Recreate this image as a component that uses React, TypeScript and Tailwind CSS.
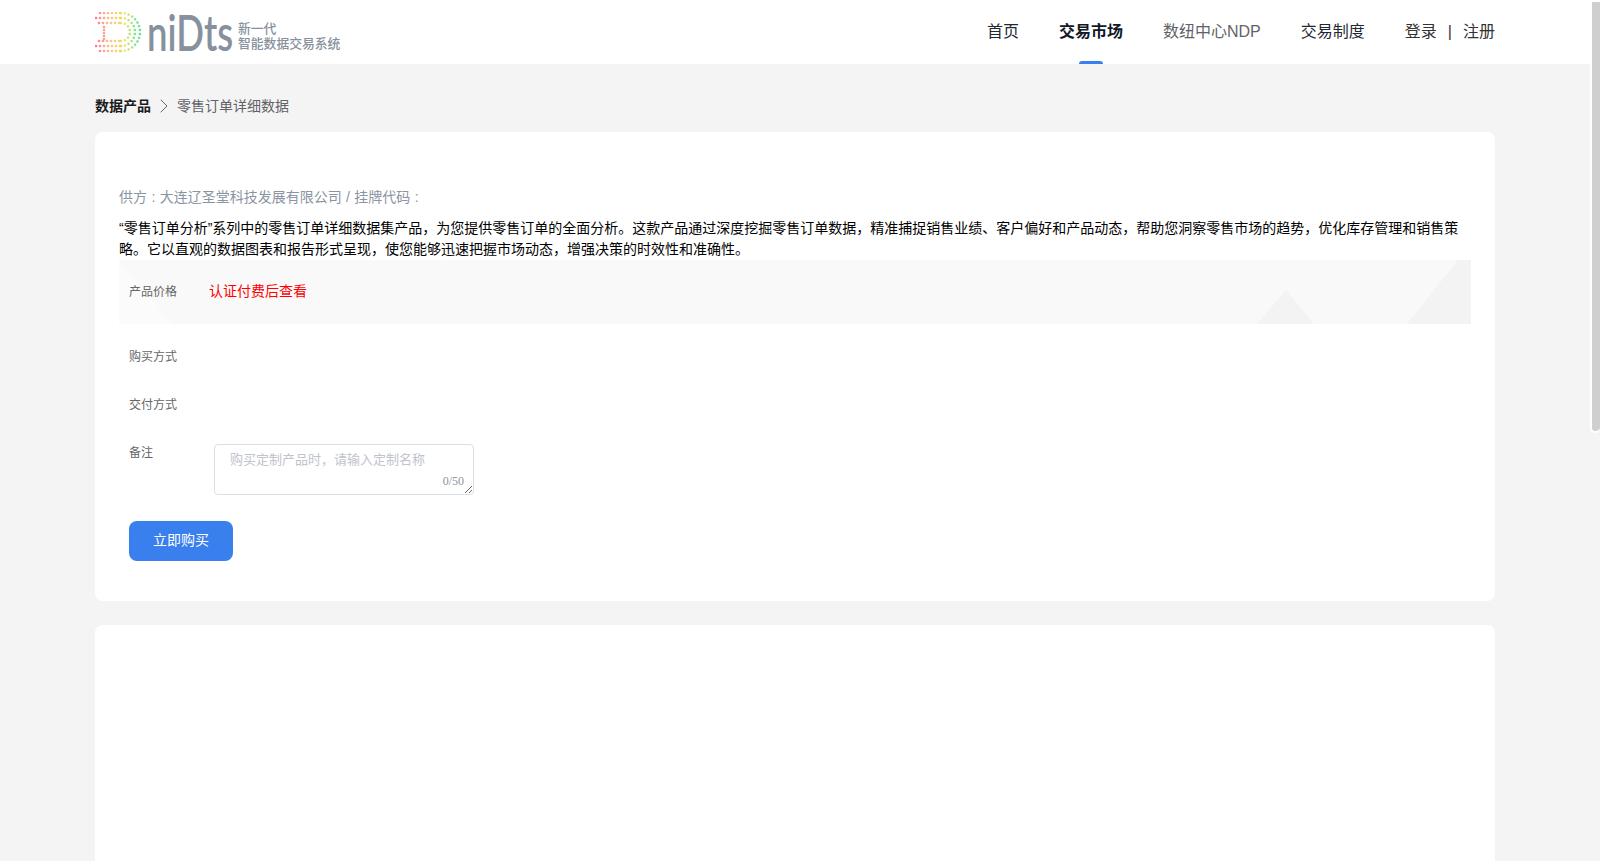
import { ChevronRight } from "lucide-react";

const CJK = "font-['Liberation_Sans','Noto_Sans_CJK_SC',sans-serif]";

// dotted "D" mark: three nested rings plus a small inner stem
function mixColor(t: number) {
  const stops = [
    [245, 96, 150],
    [251, 185, 110],
    [236, 226, 70],
    [70, 222, 130],
  ];
  const p = Math.min(0.999, Math.max(0, t)) * (stops.length - 1);
  const i = Math.floor(p);
  const f = p - i;
  const c = stops[i].map((v, k) => Math.round(v + (stops[i + 1][k] - v) * f));
  return `rgb(${c[0]},${c[1]},${c[2]})`;
}

function ringDots(left: number, top: number, right: number) {
  const dots: { x: number; y: number }[] = [];
  const bottom = 40 - top;
  const r = (bottom - top) / 2;
  const cx = right - r;
  const cy = 20;
  for (let x = left; x < cx; x += 4) dots.push({ x, y: top });
  const steps = Math.round((Math.PI * r) / 4);
  for (let i = 0; i <= steps; i++) {
    const a = -Math.PI / 2 + (Math.PI * i) / steps;
    dots.push({ x: cx + r * Math.cos(a), y: cy + r * Math.sin(a) });
  }
  for (let x = left; x < cx; x += 4) dots.push({ x, y: bottom });
  return dots;
}

function LogoMark() {
  const dots = [
    ...ringDots(5, 1, 45),
    ...ringDots(1, 6, 40),
    ...ringDots(4, 11, 35),
  ];
  const stem = [15, 18, 21, 24, 27].map((y) => ({ x: 9, y }));
  return (
    <svg width="47" height="41" viewBox="0 0 47 41" className="shrink-0">
      {[...dots, ...stem].map((d, i) => (
        <rect
          key={i}
          x={d.x - 1.2}
          y={d.y - 1.2}
          width={2.4}
          height={2.4}
          rx={0.8}
          fill={mixColor(d.x / 44)}
          fillOpacity={0.85}
        />
      ))}
    </svg>
  );
}

function Logo() {
  return (
    <div className="flex items-center">
      <LogoMark />
      <span className="ml-[5px] w-[91px] origin-left scale-x-[0.73] whitespace-nowrap font-['Lato',sans-serif] text-[50px] leading-[40px] font-semibold text-[#87919d]">
        niDts
      </span>
      <div className="mt-[8px] flex flex-col font-medium text-[#87919d]">
        <span className="text-[12.8px] leading-[14px]">新一代</span>
        <span className="whitespace-nowrap text-[12.8px] leading-[15px]">智能数据交易系统</span>
      </div>
    </div>
  );
}

function Header() {
  return (
    <header className="h-[64px] bg-white">
      <div className="mx-auto flex h-full w-[1400px] items-center justify-between">
        <Logo />
        <nav className="flex h-full items-center gap-10 text-[16px] text-[#1f2733]">
          <a>首页</a>
          <a className="relative flex h-full items-center font-bold text-[#111827]">
            交易市场
            <span className="absolute bottom-0 left-5 h-[3px] w-6 rounded-t-sm bg-[#3a7fee]" />
          </a>
          <a className="text-[#5f6368]">数纽中心NDP</a>
          <a>交易制度</a>
          <div className="flex items-center gap-[11px] text-[#333]">
            <a>登录</a>
            <span>|</span>
            <a>注册</a>
          </div>
        </nav>
      </div>
    </header>
  );
}

function PriceRow() {
  return (
    <div className="relative flex h-16 items-center overflow-hidden bg-[#f9f9f9] pl-[10px]">
      <svg width="1352" height="64" viewBox="0 0 1352 64" className="absolute left-0 top-0">
        <path d="M0 0 L54 64 L0 64 Z" fill="#fbfbfb" />
        <path d="M1138 64 L1167 30 L1195 64 Z" fill="#f3f3f3" />
        <path d="M1288 64 L1339 0 L1352 0 L1352 64 Z" fill="#f3f3f3" />
      </svg>
      <span className="relative w-[80px] text-[12px] text-[#666]">产品价格</span>
      <span className="relative -mt-[1px] text-[14px] text-[#ff0000]">认证付费后查看</span>
    </div>
  );
}

export default function App() {
  return (
    <div className={`${CJK} flex h-screen overflow-hidden bg-[#f4f4f4]`}>
      <div className="h-full flex-1 overflow-hidden">
        <Header />
        <main className="mx-auto w-[1400px]">
          <div className="flex h-[68px] items-center pt-[16px] text-[14px]">
            <span className="font-bold text-[#1b1b1b]">数据产品</span>
            <ChevronRight className="mx-[1px] h-6 w-6 text-[#666]" strokeWidth={1} />
            <span className="text-[#606266]">零售订单详细数据</span>
          </div>

          <section className="h-[469px] rounded-lg bg-white px-6 pt-[55px]">
            <p className="text-[14px] leading-[20px] text-[#8a94a3] [word-spacing:0.5px]">
              供方 : 大连辽圣堂科技发展有限公司 / 挂牌代码 :
            </p>
            <p className="mt-[11px] text-[14px] leading-[21px] text-black">
              “零售订单分析”系列中的零售订单详细数据集产品，为您提供零售订单的全面分析。这款产品通过深度挖掘零售订单数据，精准捕捉销售业绩、客户偏好和产品动态，帮助您洞察零售市场的趋势，优化库存管理和销售策略。它以直观的数据图表和报告形式呈现，使您能够迅速把握市场动态，增强决策的时效性和准确性。
            </p>
            <PriceRow />
            <div className="pl-[10px] text-[12px] text-[#666]">
              <div className="flex h-[65px] items-center pt-[1px]">购买方式</div>
              <div className="flex h-[32px] items-center">交付方式</div>
              <div className="mt-[23px] flex">
                <span className="w-[85px]">备注</span>
                <div className="relative h-[51px] w-[260px]">
                  <textarea
                    placeholder="购买定制产品时，请输入定制名称"
                    className="h-full w-full rounded-[4px] border border-[#dcdfe6] bg-white px-[15px] py-[5px] text-[13px] leading-[20px] outline-none placeholder:text-[#c0c4cc]"
                  />
                  <span className="absolute bottom-[5px] right-[10px] font-['Liberation_Serif',serif] text-[12px] font-light text-[#909399]">
                    0/50
                  </span>
                </div>
              </div>
              <button className="mt-[26px] h-10 w-[104px] rounded-lg bg-[#3a7fee] pb-[1px] text-[14px] text-white">
                立即购买
              </button>
            </div>
          </section>

          <section className="mt-6 h-[300px] rounded-lg bg-white" />
        </main>
      </div>
      {/* scrollbar strip */}
      <div className="w-[10px] shrink-0">
        <div className="h-[433px] rounded-b-[5px] border-2 border-r-0 border-white bg-[#cfcfcf]" />
      </div>
    </div>
  );
}
